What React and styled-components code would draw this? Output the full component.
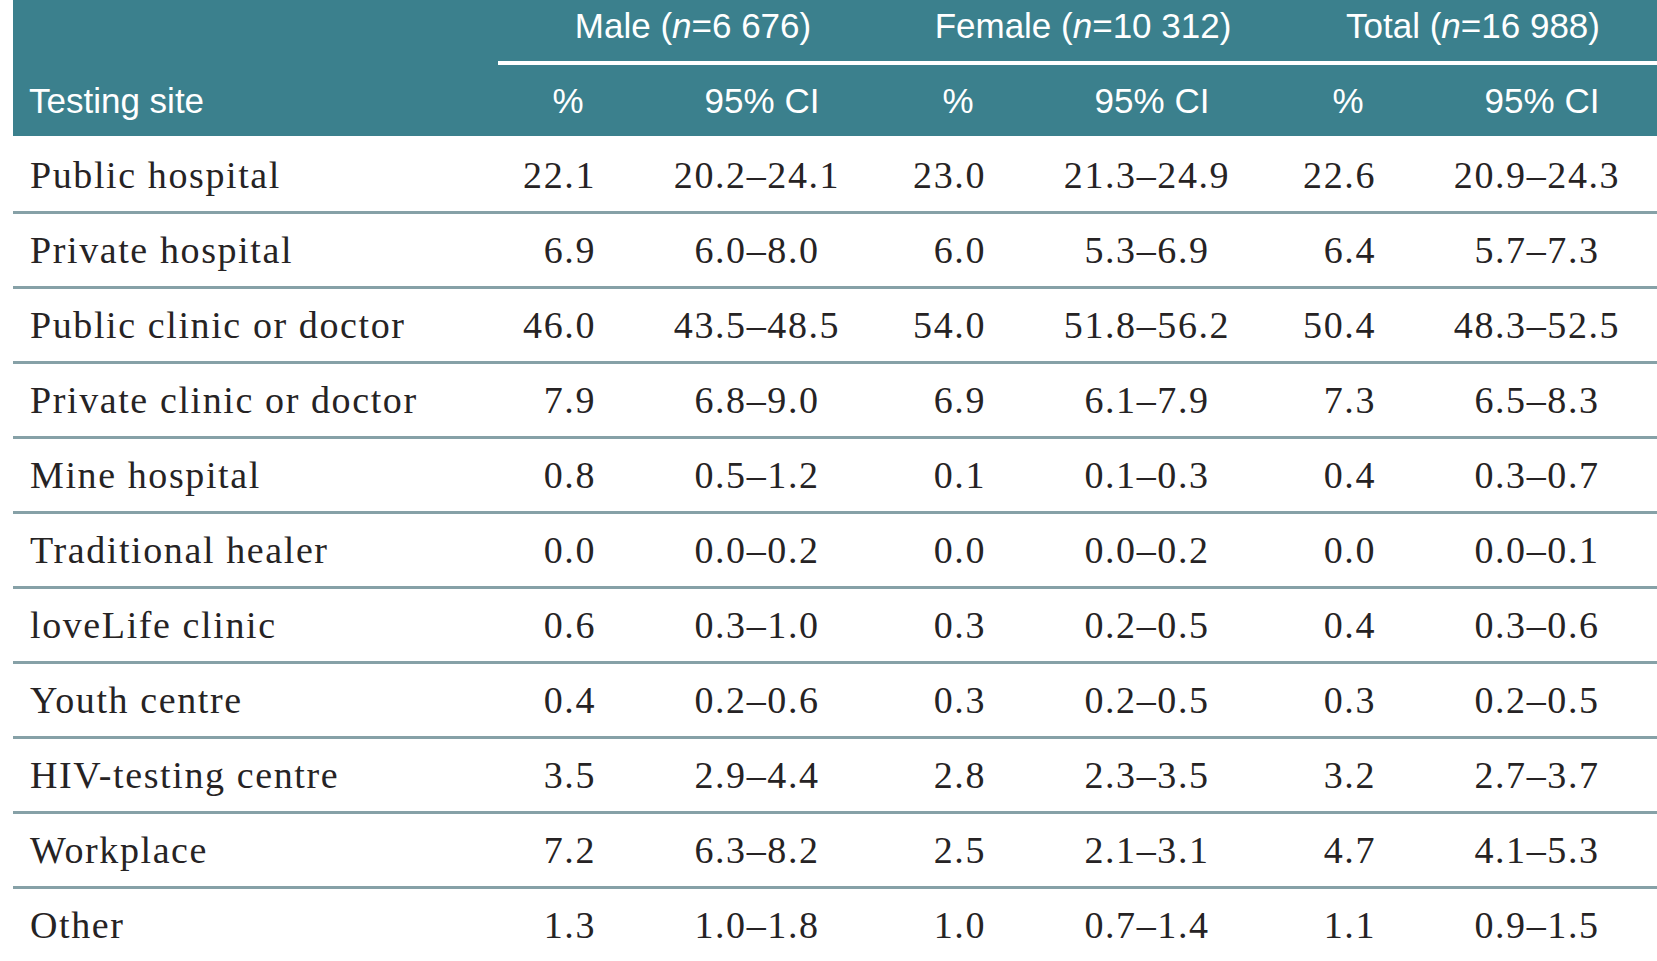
import React from "react";
import styled, { createGlobalStyle } from "styled-components";

const Global = createGlobalStyle`
  html, body { margin: 0; padding: 0; background: #ffffff; overflow: hidden; }
  body { width: 1657px; height: 961px; }
`;

const COLS = "485px 128px 262px 128px 262px 128px 262px";

const Page = styled.div`
  padding-left: 13px;
  width: 1655px;
`;

const Head = styled.div`
  display: grid;
  grid-template-columns: ${COLS};
  grid-template-rows: 65px 71px;
  background: #3b808d;
  color: #ffffff;
  font-family: "Liberation Sans", Arial, sans-serif;
  font-size: 35px;
`;

const GroupTitle = styled.div`
  grid-row: 1;
  grid-column: span 2;
  box-sizing: border-box;
  border-bottom: 4px solid #ffffff;
  display: flex;
  align-items: center;
  justify-content: center;
  padding-bottom: 9px;
  white-space: nowrap;
`;

const Spacer = styled.div`
  grid-row: 1;
`;

const HeadCell = styled.div`
  grid-row: 2;
  display: flex;
  align-items: center;
  justify-content: ${(p) => (p.$left ? "flex-start" : "center")};
  padding-left: ${(p) => p.$pl || 0}px;
  white-space: nowrap;
`;

const Body = styled.div`
  padding-top: 3px;
  font-family: "Liberation Serif", "Times New Roman", serif;
  font-size: 38px;
  letter-spacing: 1.6px;
  color: #262324;
`;

const Row = styled.div`
  display: grid;
  grid-template-columns: ${COLS};
  height: 75px;
  box-sizing: border-box;
  border-bottom: 3px solid ${(p) => (p.$last ? "transparent" : "#86a1a7")};
`;

const Label = styled.div`
  display: flex;
  align-items: center;
  padding-left: 17px;
  white-space: nowrap;
`;

const Pct = styled.div`
  display: flex;
  align-items: center;
  justify-content: flex-end;
  padding-right: 30px;
`;

const CI = styled.div`
  display: flex;
  align-items: center;
  justify-content: center;
  white-space: nowrap;
`;

const rows = [
  ["Public hospital", "22.1", "20.2–24.1", "23.0", "21.3–24.9", "22.6", "20.9–24.3"],
  ["Private hospital", "6.9", "6.0–8.0", "6.0", "5.3–6.9", "6.4", "5.7–7.3"],
  ["Public clinic or doctor", "46.0", "43.5–48.5", "54.0", "51.8–56.2", "50.4", "48.3–52.5"],
  ["Private clinic or doctor", "7.9", "6.8–9.0", "6.9", "6.1–7.9", "7.3", "6.5–8.3"],
  ["Mine hospital", "0.8", "0.5–1.2", "0.1", "0.1–0.3", "0.4", "0.3–0.7"],
  ["Traditional healer", "0.0", "0.0–0.2", "0.0", "0.0–0.2", "0.0", "0.0–0.1"],
  ["loveLife clinic", "0.6", "0.3–1.0", "0.3", "0.2–0.5", "0.4", "0.3–0.6"],
  ["Youth centre", "0.4", "0.2–0.6", "0.3", "0.2–0.5", "0.3", "0.2–0.5"],
  ["HIV-testing centre", "3.5", "2.9–4.4", "2.8", "2.3–3.5", "3.2", "2.7–3.7"],
  ["Workplace", "7.2", "6.3–8.2", "2.5", "2.1–3.1", "4.7", "4.1–5.3"],
  ["Other", "1.3", "1.0–1.8", "1.0", "0.7–1.4", "1.1", "0.9–1.5"],
];

const groups = [
  ["Male", "6 676"],
  ["Female", "10 312"],
  ["Total", "16 988"],
];

export default function App() {
  return (
    <Page>
      <Global />
      <Head>
        <Spacer />
        {groups.map(([g, n]) => (
          <GroupTitle key={g}>
            {g}&nbsp;(<i>n</i>={n})
          </GroupTitle>
        ))}
        <HeadCell $left $pl={16}>Testing site</HeadCell>
        {groups.map(([g]) => (
          <React.Fragment key={g}>
            <HeadCell $pl={12}>%</HeadCell>
            <HeadCell $pl={10}>95% CI</HeadCell>
          </React.Fragment>
        ))}
      </Head>
      <Body>
        {rows.map((r, i) => (
          <Row key={r[0]} $last={i === rows.length - 1}>
            <Label>{r[0]}</Label>
            <Pct>{r[1]}</Pct>
            <CI>{r[2]}</CI>
            <Pct>{r[3]}</Pct>
            <CI>{r[4]}</CI>
            <Pct>{r[5]}</Pct>
            <CI>{r[6]}</CI>
          </Row>
        ))}
      </Body>
    </Page>
  );
}
